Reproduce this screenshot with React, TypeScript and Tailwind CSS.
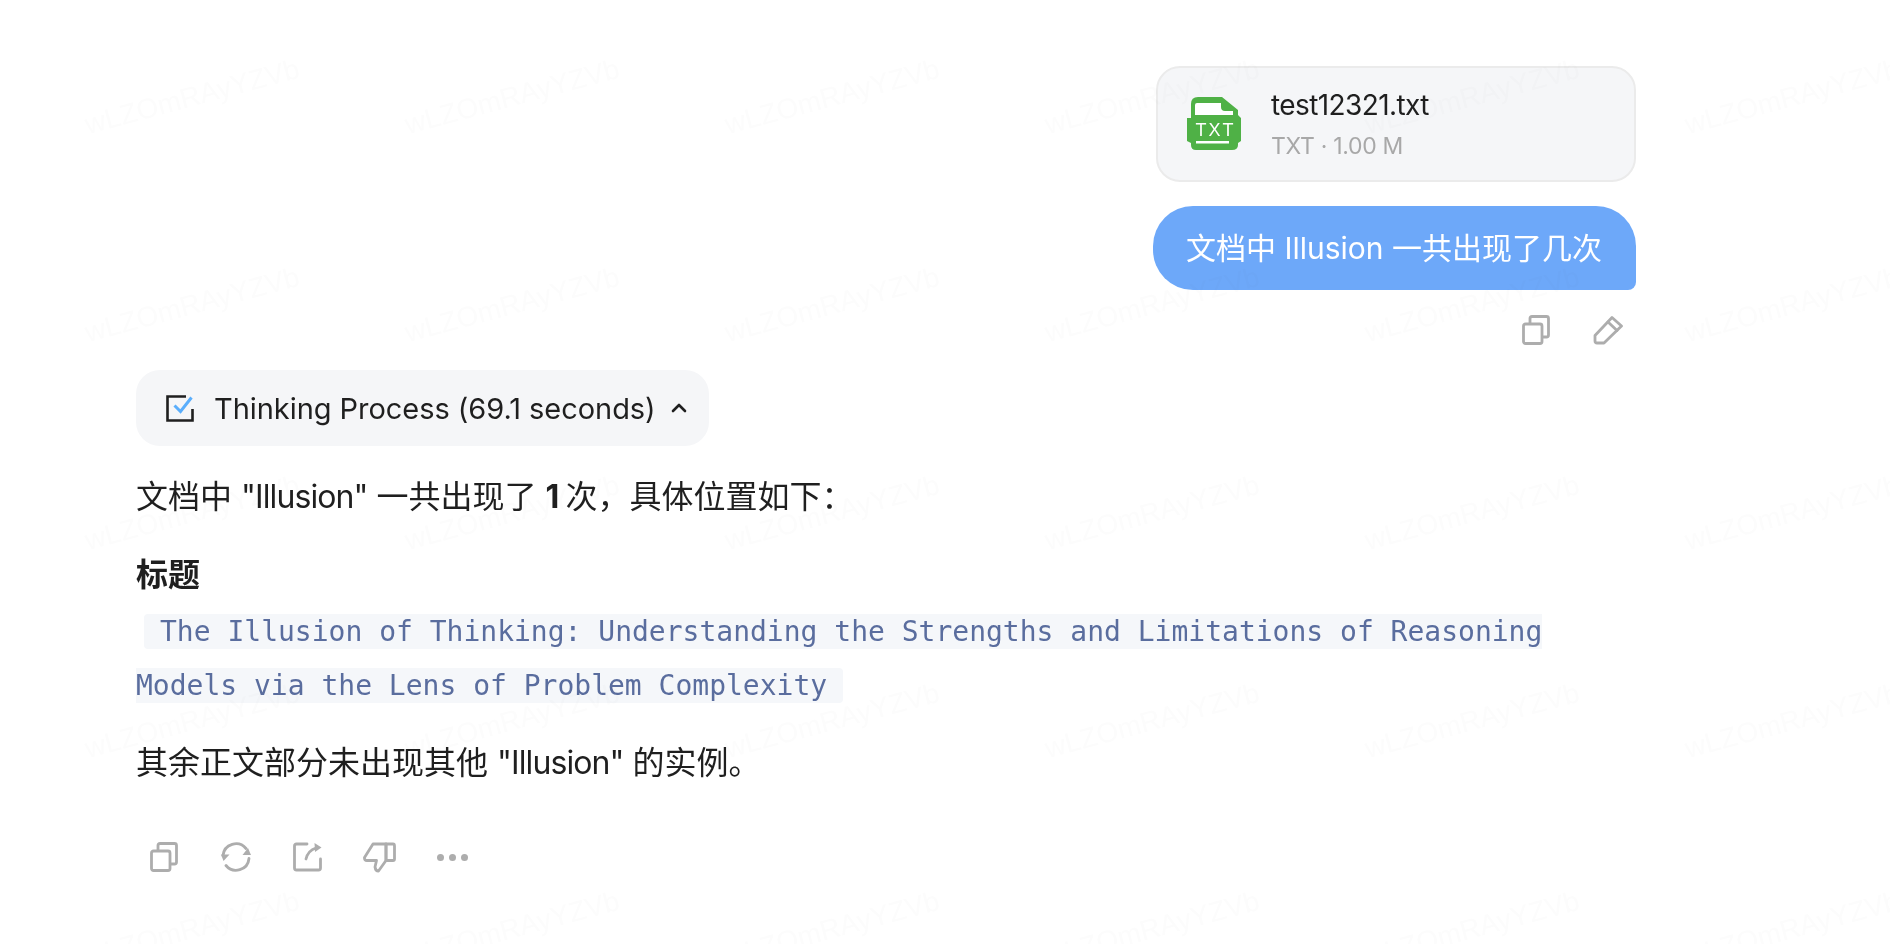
const sans = "font-['Inter','Noto_Sans_CJK_SC',sans-serif]";

function CopyIcon() {
  return (
    <svg width="28" height="30" viewBox="0 0 28 30" fill="none" stroke="#adadad" strokeWidth="2.8" strokeLinejoin="round">
      <rect x="1.5" y="9" width="18.5" height="19.5" rx="2" />
      <path d="M8 9V3.5Q8 1.5 10 1.5H24.5Q26.5 1.5 26.5 3.5V20Q26.5 22 24.5 22H20" />
    </svg>
  );
}

function PencilIcon() {
  return (
    <svg width="30" height="30" viewBox="0 0 30 30" fill="none" stroke="#adadad" strokeWidth="2.8" strokeLinejoin="round" strokeLinecap="round">
      <path d="M2 20.5L19 2.5L28.5 11L11 28H4Q2 28 2 26Z" />
      <path d="M15 7L24 15.5" />
    </svg>
  );
}

function RefreshIcon() {
  return (
    <svg width="32" height="32" viewBox="0 0 32 32" fill="none" stroke="#adadad" strokeWidth="2.8" strokeLinecap="round">
      <path d="M3 14.5A13 13 0 0 1 26 7.5" />
      <path d="M29 17.5A13 13 0 0 1 6 24.5" />
      <path d="M22.5 14H31L28 7Z" fill="#adadad" stroke="none" />
      <path d="M1 13.5H9.5L3.5 20Z" fill="#adadad" stroke="none" />
    </svg>
  );
}

function ShareIcon() {
  return (
    <svg width="29" height="30" viewBox="0 0 29 30" fill="none" stroke="#adadad" strokeWidth="2.8" strokeLinejoin="round" strokeLinecap="round">
      <path d="M14 2H3.5Q1.5 2 1.5 4V26Q1.5 28 3.5 28H25.5Q27.5 28 27.5 26V17" />
      <path d="M13 17Q15 8.5 23 6" />
      <path d="M21.5 1L28.5 5.5L22 10Z" fill="#adadad" stroke="none" />
    </svg>
  );
}

function ThumbDownIcon() {
  return (
    <svg width="33" height="31" viewBox="0 0 33 31" fill="none" stroke="#adadad" strokeWidth="2.8" strokeLinejoin="round" strokeLinecap="round">
      <path d="M23 2H10L1.5 15.5Q1.2 18.5 4 18.5H13.5L12 25Q12.5 29 15.5 29L23 18.5Z" />
      <path d="M23 2H30Q31.5 2 31.5 4V17Q31.5 18.5 30 18.5H23Z" />
    </svg>
  );
}

function Watermark() {
  const cells = Array.from({ length: 36 });
  return (
    <div className="absolute left-[32px] top-[-7px] w-[1920px] flex flex-wrap pointer-events-none mix-blend-multiply">
      {cells.map((_, i) => (
        <div key={i} className="w-[320px] h-[208px] flex items-center justify-center">
          <span className="-rotate-[15deg] text-[28px] whitespace-nowrap text-[#fcfcfc] font-['Liberation_Sans',sans-serif]">wLZOmRAyYZVb</span>
        </div>
      ))}
    </div>
  );
}

function FileIcon() {
  return (
    <svg width="56" height="56" viewBox="0 0 56 56" className="shrink-0">
      <path d="M5 22V8Q5 1 12 1H36L52 14V19L55 22V45L52 47V49Q52 54 46 54H10Q5 54 5 49V47L1 45V22Z" fill="#4fb146" />
      <path d="M9 19V9Q9 7 11 7H35V11Q35 15 39 15H47V19Z" fill="#fff" />
      <text x="9.5" y="40" fill="#fff" fontSize="18" letterSpacing="2" fontFamily="'Liberation Sans',sans-serif">TXT</text>
      <rect x="10" y="45" width="33" height="2.5" fill="#fff" />
    </svg>
  );
}

export default function App() {
  return (
    <div className={`relative h-[944px] overflow-hidden bg-white text-[#1f1f1f] ${sans}`}>
      <div className="w-[1636px] pl-[136px] pt-[66px] flex flex-col">
        <div className="flex flex-col items-end">
          <div className="w-[480px] h-[116px] rounded-[24px] border-2 border-[#ebebeb] bg-[#f5f6f8] flex items-center pl-[28px] gap-[29px]">
            <FileIcon />
            <div className="flex flex-col">
              <span className="text-[28px] leading-[38px] tracking-[-0.6px]">test12321.txt</span>
              <span className="text-[23px] leading-[32px] tracking-[-0.3px] mt-[6px] text-[#a8a8a8]">TXT · 1.00 M</span>
            </div>
          </div>
          <div className="mt-[24px] w-[483px] h-[84px] rounded-[40px] rounded-br-[8px] bg-[#6da8f9] text-white text-[30px] flex items-center pl-[33px] whitespace-nowrap">
            文档中 Illusion 一共出现了几次
          </div>
          <div className="mt-[25px] h-[30px] flex items-center gap-[43px] pr-[13px]">
            <CopyIcon />
            <PencilIcon />
          </div>
        </div>

        <div className="mt-[25px] self-start w-[573px] h-[76px] rounded-[24px] bg-[#f5f6f8] flex items-center pl-[30px] gap-[20px]">
          <svg width="28" height="27" viewBox="0 0 28 27" fill="none" className="shrink-0" strokeWidth="2.6">
            <path d="M20 1.5H1.5V25.5H26.5V14" stroke="#1f1f1f" />
            <path d="M8.5 10.5L14.5 16.5L25.5 2.5" stroke="#5aaefc" strokeWidth="3" />
          </svg>
          <span className="text-[29px] whitespace-nowrap tracking-[-0.05px] pt-[2px]">Thinking Process (69.1 seconds)</span>
          <svg width="16" height="10" viewBox="0 0 16 10" fill="none" stroke="#1f1f1f" strokeWidth="2.6" strokeLinecap="round" strokeLinejoin="round" className="shrink-0 ml-[-5px]">
            <path d="M2 8L8 2L14 8" />
          </svg>
        </div>

        <p className="mt-[30px] text-[32px] leading-[42px]">
          文档中 <span className="tracking-[-0.9px]">"Illusion"</span> 一共出现了 <b className="font-bold mr-[-3px]">1</b> 次，具体位置如下：
        </p>
        <p className="mt-[36px] text-[32px] leading-[42px] font-bold">标题</p>
        <p className="mt-[9px] text-[28px] leading-[54px] font-['DejaVu_Sans_Mono',monospace]">
          <code className="font-['DejaVu_Sans_Mono',monospace] text-[#5a6d9e] bg-[#f5f7fa] ml-[8px] pl-[16px] pr-[16px] py-[1px] rounded-[4px]">
            The Illusion of Thinking: Understanding the Strengths and Limitations of Reasoning Models via the Lens of Problem Complexity
          </code>
        </p>
        <p className="mt-[29px] text-[32px] leading-[42px]">其余正文部分未出现其他 <span className="tracking-[-0.9px]">"Illusion"</span> 的实例。</p>

        <div className="mt-[57px] pl-[14px] flex items-center h-[32px]">
          <CopyIcon />
          <div className="ml-[42px]"><RefreshIcon /></div>
          <div className="ml-[41px]"><ShareIcon /></div>
          <div className="ml-[41px]"><ThumbDownIcon /></div>
          <div className="ml-[41px] flex gap-[5px]">
            <span className="w-[7px] h-[7px] rounded-full bg-[#adadad]" />
            <span className="w-[7px] h-[7px] rounded-full bg-[#adadad]" />
            <span className="w-[7px] h-[7px] rounded-full bg-[#adadad]" />
          </div>
        </div>
      </div>
      <Watermark />
    </div>
  );
}
